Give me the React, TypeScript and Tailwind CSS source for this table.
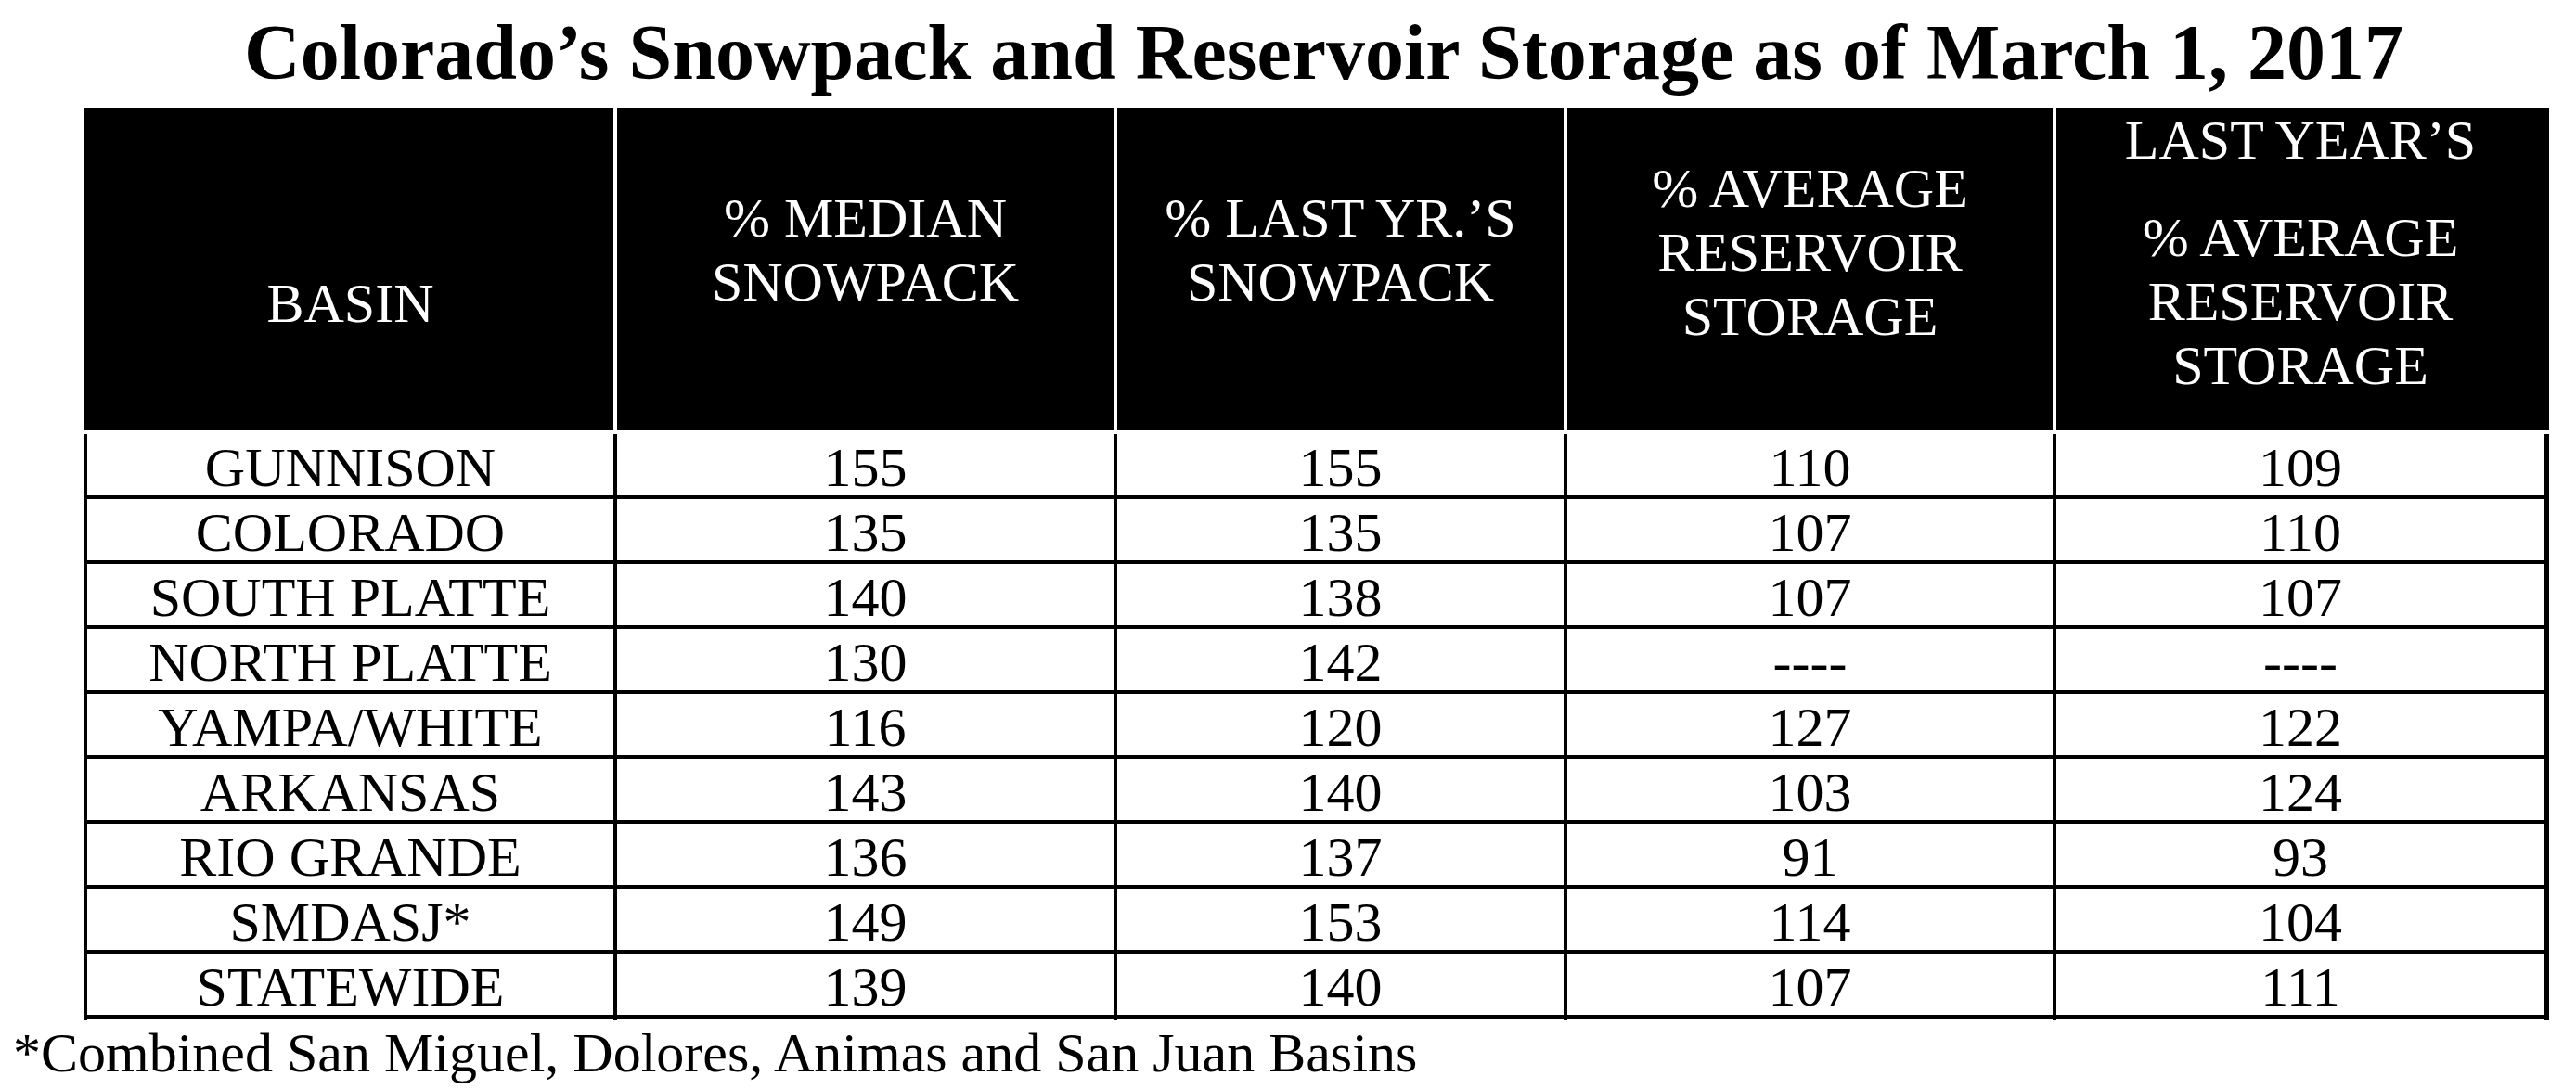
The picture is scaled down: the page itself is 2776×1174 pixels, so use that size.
import React from 'react';

const rows = [
    ['GUNNISON', '155', '155', '110', '109'],
    ['COLORADO', '135', '135', '107', '110'],
    ['SOUTH PLATTE', '140', '138', '107', '107'],
    ['NORTH PLATTE', '130', '142', '----', '----'],
    ['YAMPA/WHITE', '116', '120', '127', '122'],
    ['ARKANSAS', '143', '140', '103', '124'],
    ['RIO GRANDE', '136', '137', '91', '93'],
    ['SMDASJ*', '149', '153', '114', '104'],
    ['STATEWIDE', '139', '140', '107', '111'],
];

const App = () => {
    return (
        <div className="w-[2776px] h-[1174px] bg-white text-black font-['Liberation_Serif','Times_New_Roman',serif]">
            <h1 className="h-[116px] pt-[8px] pl-[110px] w-[2743px] text-center text-[84px] font-bold leading-[97px]">
                Colorado’s Snowpack and Reservoir Storage as of March 1, 2017
            </h1>

            <div className="ml-[90px] w-[2657px]">
                {/* header */}
                <div className="grid grid-cols-[571px_539px_485px_527px_535px] h-[348px] bg-black text-white text-[60px] leading-[69px] text-center">
                    <div className="pt-[177px] border-l-[4px] border-black">BASIN</div>
                    <div className="pt-[85px] border-l-[4px] border-white">
                        <div>% MEDIAN</div>
                        <div>SNOWPACK</div>
                    </div>
                    <div className="pt-[85px] border-l-[4px] border-white">
                        <div>% LAST YR.’S</div>
                        <div>SNOWPACK</div>
                    </div>
                    <div className="pt-[53px] border-l-[4px] border-white">
                        <div>% AVERAGE</div>
                        <div>RESERVOIR</div>
                        <div>STORAGE</div>
                    </div>
                    <div className="pt-[1px] border-l-[4px] border-r-[5px] border-l-white border-r-black">
                        <div>LAST YEAR’S</div>
                        <div className="mt-[36px]">% AVERAGE</div>
                        <div>RESERVOIR</div>
                        <div>STORAGE</div>
                    </div>
                </div>

                {/* body */}
                <div className="pt-[4px]">
                    {rows.map((row) => (
                        <div
                            key={row[0]}
                            className="grid grid-cols-[571px_539px_485px_527px_535px] h-[70px] border-b-[4px] border-black text-[60px] leading-[72px] text-center"
                        >
                            {row.map((cell, i) => (
                                <div
                                    key={i}
                                    className={
                                        i === 4
                                            ? 'border-l-[4px] border-r-[5px] border-black'
                                            : 'border-l-[4px] border-black'
                                    }
                                >
                                    {cell}
                                </div>
                            ))}
                        </div>
                    ))}
                </div>
            </div>

            <p className="mt-[3px] pl-[14px] text-[60px] leading-[69px]">
                *Combined San Miguel, Dolores, Animas and San Juan Basins
            </p>
        </div>
    );
};

export default App;
